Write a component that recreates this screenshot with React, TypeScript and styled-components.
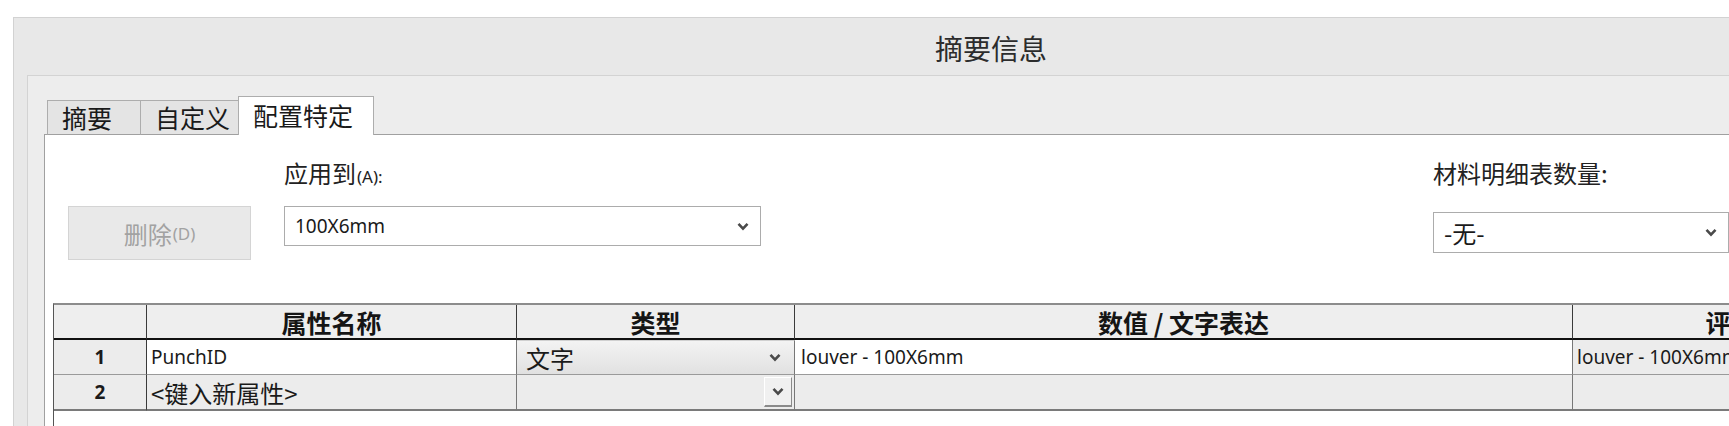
import React from 'react'
import styled, { createGlobalStyle } from 'styled-components'

const CJK = `"Noto Sans CJK SC", "Noto Sans", sans-serif`
const LATIN = `"Noto Sans", "Noto Sans CJK SC", sans-serif`

const GlobalStyle = createGlobalStyle`
  html, body {
    margin: 0;
    padding: 0;
    background: #ffffff;
  }
  body {
    width: 1729px;
    height: 426px;
    overflow: hidden;
    font-family: ${CJK};
    color: #1e1e1e;
  }
`

type Col = { title: string; width: number }

const columns: Col[] = [
  { title: '', width: 93 },
  { title: '属性名称', width: 370 },
  { title: '类型', width: 278 },
  { title: '数值 / 文字表达', width: 778 },
  { title: '评论', width: 316 },
]

const Chevron: React.FC = () => (
  <svg width="12" height="9" viewBox="0 0 12 9" aria-hidden="true">
    <path d="M1.5 1.8 L6 6.6 L10.5 1.8" fill="none" stroke="#4a4a4a" strokeWidth="2.6" strokeLinejoin="miter" />
  </svg>
)

const App: React.FC = () => {
  return (
    <>
      <GlobalStyle />
      <Dialog>
        <TitleBar>摘要信息</TitleBar>
        <Body>
          <TabStrip>
            <Tab $width={94}>摘要</Tab>
            <Tab $width={99}>自定义</Tab>
            <Tab $width={136} $active>配置特定</Tab>
          </TabStrip>
          <Panel>
            <TopForm>
              <DeleteCol>
                <DeleteButton>
                  删除<Mnemonic>(D)</Mnemonic>
                </DeleteButton>
              </DeleteCol>
              <Field $width={477} $offset={33}>
                <Label>
                  应用到<Mnemonic>(A):</Mnemonic>
                </Label>
                <Combo $top={18} $height={40}>
                  <ComboText $latin>100X6mm</ComboText>
                  <Chevron />
                </Combo>
              </Field>
              <Field $width={296} $offset={672}>
                <Label>材料明细表数量:</Label>
                <Combo $top={24} $height={41}>
                  <ComboText>-无-</ComboText>
                  <Chevron />
                </Combo>
              </Field>
            </TopForm>

            <Grid>
              <Rows style={{ gridTemplateColumns: columns.map(c => `${c.width}px`).join(' ') }}>
                {columns.map((c, i) => (
                  <HeadCell key={i}>{c.title}</HeadCell>
                ))}

                <NumCell>1</NumCell>
                <Cell $latin>PunchID</Cell>
                <TypeCell>
                  <span>文字</span>
                  <Chevron />
                </TypeCell>
                <Cell $latin $pad={6}>louver - 100X6mm</Cell>
                <Cell $latin $gray>louver - 100X6mm</Cell>

                <NumCell $last>2</NumCell>
                <Cell $gray $last>&lt;键入新属性&gt;</Cell>
                <Cell $gray $last $end>
                  <DropButton>
                    <Chevron />
                  </DropButton>
                </Cell>
                <Cell $gray $last />
                <Cell $gray $last />
              </Rows>
            </Grid>
          </Panel>
        </Body>
      </Dialog>
    </>
  )
}

export default App

const Dialog = styled.div`
  margin: 17px 0 0 13px;
  width: 1954px;
  height: 409px;
  border: 1px solid #d2d2d2;
  border-bottom: none;
  background: #e8e8e8;
  display: flex;
  flex-direction: column;
`

const TitleBar = styled.div`
  height: 57px;
  box-sizing: border-box;
  padding-top: 3px;
  display: flex;
  align-items: center;
  justify-content: center;
  font-size: 28px;
  color: #2c2c2c;
`

const Body = styled.div`
  flex: 1;
  display: flex;
  flex-direction: column;
  margin-left: 13px;
  border-top: 1px solid #d3d3d3;
  border-left: 1px solid #d3d3d3;
  background: #ededed;
  padding: 20px 0 0 16px;
  min-height: 0;
`

const TabStrip = styled.div`
  display: flex;
  align-items: flex-end;
  padding-left: 3px;
  height: 39px;
  margin-bottom: -1px;
  position: relative;
  z-index: 1;
`

const Tab = styled.div<{ $width: number; $active?: boolean }>`
  box-sizing: border-box;
  width: ${p => p.$width}px;
  height: ${p => (p.$active ? 39 : 35)}px;
  margin-left: -1px;
  padding-left: 14px;
  border: 1px solid #adadad;
  border-bottom: ${p => (p.$active ? 'none' : '1px solid #a0a0a0')};
  background: ${p => (p.$active ? '#ffffff' : '#e4e4e4')};
  font-size: 25px;
  line-height: ${p => (p.$active ? 37 : 32)}px;
  color: #1a1a1a;
  white-space: nowrap;

  &:first-child {
    margin-left: 0;
  }
`

const Panel = styled.div`
  flex: 1;
  display: flex;
  flex-direction: column;
  background: #ffffff;
  border-top: 1px solid #a0a0a0;
  border-left: 1px solid #a0a0a0;
  min-height: 0;
`

const TopForm = styled.div`
  display: flex;
  align-items: flex-start;
  padding: 23px 0 0 23px;
`

const DeleteCol = styled.div`
  padding-top: 48px;
`

const DeleteButton = styled.div`
  box-sizing: border-box;
  width: 183px;
  height: 54px;
  display: flex;
  align-items: center;
  justify-content: center;
  background: #e9e9e9;
  border: 1px solid #d4d4d4;
  font-size: 24px;
  color: #a2a2a2;
`

const Mnemonic = styled.span`
  font-family: ${LATIN};
  font-size: 17px;
  margin-left: 1px;
`

const Field = styled.div<{ $width: number; $offset: number }>`
  width: ${p => p.$width}px;
  margin-left: ${p => p.$offset}px;
  display: flex;
  flex-direction: column;
`

const Label = styled.div`
  height: 30px;
  line-height: 30px;
  font-size: 24px;
  color: #222;
  white-space: nowrap;
`

const Combo = styled.div<{ $top: number; $height: number }>`
  box-sizing: border-box;
  margin-top: ${p => p.$top}px;
  height: ${p => p.$height}px;
  display: flex;
  align-items: center;
  justify-content: space-between;
  padding: 0 11px 0 10px;
  border: 1px solid #acacac;
  background: #ffffff;
`

const ComboText = styled.span<{ $latin?: boolean }>`
  font-family: ${p => (p.$latin ? LATIN : CJK)};
  font-size: ${p => (p.$latin ? 19 : 24)}px;
  color: #1a1a1a;
`

const Grid = styled.div`
  flex: 1;
  margin: 43px 0 0 8px;
  border-top: 2px solid #8c8c8c;
  border-left: 1px solid #555555;
  background: #ffffff;
`

const Rows = styled.div`
  display: grid;
`

const HeadCell = styled.div`
  box-sizing: border-box;
  height: 35px;
  display: flex;
  align-items: center;
  justify-content: center;
  background: #eeeeee;
  border-right: 1px solid #3a3a3a;
  border-bottom: 2px solid #111111;
  font-size: 25px;
  font-weight: 700;
  color: #151515;
  white-space: nowrap;
  overflow: hidden;
`

const NumCell = styled.div<{ $last?: boolean }>`
  box-sizing: border-box;
  height: ${p => (p.$last ? 36 : 35)}px;
  display: flex;
  align-items: center;
  justify-content: center;
  background: #ececec;
  border-right: 1px solid #3a3a3a;
  border-bottom: ${p => (p.$last ? '2px solid #7a7a7a' : '1px solid #9a9a9a')};
  font-family: ${LATIN};
  font-size: 19px;
  font-weight: 700;
  color: #1a1a1a;
`

const Cell = styled.div<{ $gray?: boolean; $last?: boolean; $latin?: boolean; $pad?: number; $end?: boolean }>`
  box-sizing: border-box;
  height: ${p => (p.$last ? 36 : 35)}px;
  display: flex;
  align-items: center;
  justify-content: ${p => (p.$end ? 'flex-end' : 'flex-start')};
  padding: ${p => (p.$end ? '0 2px 0 0' : `0 0 0 ${p.$pad ?? 4}px`)};
  background: ${p => (p.$gray ? '#ececec' : '#ffffff')};
  border-right: 1px solid #777777;
  border-bottom: ${p => (p.$last ? '2px solid #7a7a7a' : '1px solid #9a9a9a')};
  font-family: ${p => (p.$latin ? LATIN : CJK)};
  font-size: ${p => (p.$latin ? 19 : 24)}px;
  color: #1a1a1a;
  white-space: nowrap;
  overflow: hidden;
`

const TypeCell = styled.div`
  box-sizing: border-box;
  height: 35px;
  display: flex;
  align-items: center;
  justify-content: space-between;
  padding: 0 13px 0 9px;
  background: linear-gradient(#f3f3f3, #e1e1e1);
  border-top: 1px solid #d0d0d0;
  border-right: 1px solid #777777;
  border-bottom: 1px solid #9a9a9a;
  font-size: 24px;
  color: #1a1a1a;
`

const DropButton = styled.div`
  box-sizing: border-box;
  width: 28px;
  height: 30px;
  display: flex;
  align-items: center;
  justify-content: center;
  background: #f0f0f0;
  border-top: 1px solid #ffffff;
  border-left: 1px solid #ffffff;
  border-right: 1px solid #8a8a8a;
  border-bottom: 2px solid #8a8a8a;
`
